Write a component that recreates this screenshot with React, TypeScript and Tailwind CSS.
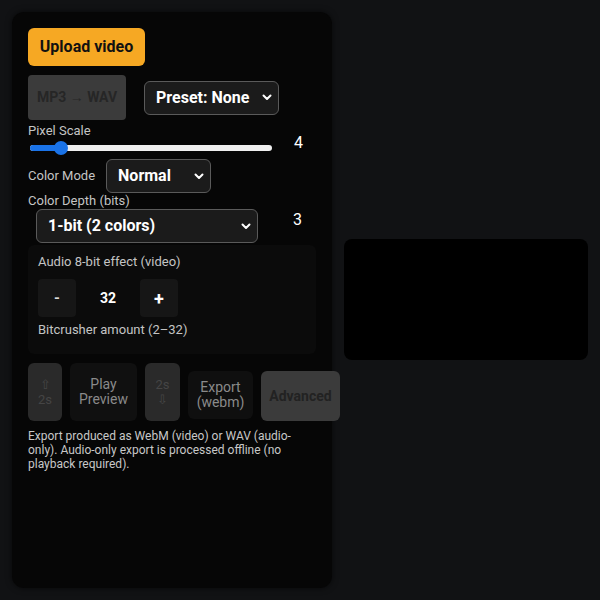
import React from "react";

function Chevron() {
  return (
    <svg width="10" height="7" viewBox="0 0 10 7" className="shrink-0">
      <path d="M1.5 1.5 L5 5 L8.5 1.5" fill="none" stroke="#ffffff" strokeWidth="2" strokeLinecap="round" strokeLinejoin="round" />
    </svg>
  );
}

function Select({ label, className }: { label: string; className: string }) {
  return (
    <div className={"flex items-center justify-between rounded-[6px] border border-[#5a5a5a] bg-[#1b1b1b] pl-[11px] pr-[6px] text-[16px] font-bold text-white " + className}>
      <span>{label}</span>
      <Chevron />
    </div>
  );
}

export default function App() {
  return (
    <div className="min-h-[600px] w-[600px] bg-[#111214] p-[12px] flex gap-[12px] items-start" style={{ fontFamily: "Roboto, 'Liberation Sans', sans-serif" }}>
      <div className="w-[320px] h-[576px] shrink-0 rounded-[12px] bg-[#060606] shadow-[0_0_6px_rgba(0,0,0,0.6)] px-[16px] pt-[16px]">
        <button className="h-[38px] w-[117px] rounded-[6px] bg-[#f6a823] text-[16px] font-bold text-[#111]">Upload video</button>

        <div className="mt-[9px] flex items-center gap-[18px]">
          <div className="flex h-[45px] w-[98px] items-center justify-center rounded-[4px] bg-[#3b3b3b] text-[14px] font-bold text-[#262626]">MP3 → WAV</div>
          <Select label="Preset: None" className="h-[34px] w-[135px]" />
        </div>

        <div className="mt-[3px] text-[13px] leading-[16px] text-[#c4c4c4]">Pixel Scale</div>
        <div className="flex h-[16px] items-start">
          <div className="relative ml-[2px] mt-[2px] h-[14px] w-[242px]">
            <div className="absolute left-0 right-0 top-[4px] h-[6px] rounded-full bg-[#efefef]" />
            <div className="absolute left-0 top-[4px] h-[6px] w-[32px] rounded-full bg-[#1a73e8]" />
            <div className="absolute left-[24px] top-0 h-[14px] w-[14px] rounded-full bg-[#1a73e8]" />
          </div>
          <div className="ml-[22px] -mt-[6px] text-[16px] leading-[20px] text-white">4</div>
        </div>

        <div className="mt-[4px] flex items-center gap-[11px]">
          <span className="text-[13px] text-[#c4c4c4]">Color Mode</span>
          <Select label="Normal" className="h-[34px] w-[105px]" />
        </div>
        <div className="text-[13px] leading-[16px] text-[#c4c4c4]">Color Depth (bits)</div>
        <div className="flex items-start">
          <Select label="1-bit (2 colors)" className="ml-[8px] h-[34px] w-[222px]" />
          <div className="ml-[35px] mt-[1px] text-[16px] leading-[20px] text-white">3</div>
        </div>

        <div className="mt-[2px] h-[109px] rounded-[6px] bg-[#0b0b0b] px-[10px] pt-[9px]">
          <div className="text-[13px] leading-[16px] text-[#c4c4c4]">Audio 8-bit effect (video)</div>
          <div className="mt-[9px] flex items-center">
            <div className="flex h-[38px] w-[38px] items-center justify-center rounded-[4px] bg-[#161616] text-[15px] font-bold text-[#dcdcdc]">-</div>
            <div className="w-[64px] text-center text-[14px] font-bold text-white">32</div>
            <div className="flex h-[38px] w-[38px] items-center justify-center rounded-[4px] bg-[#161616] text-[18px] font-bold text-white">+</div>
          </div>
          <div className="mt-[5px] text-[13px] leading-[16px] text-[#c4c4c4]">Bitcrusher amount (2–32)</div>
        </div>

        <div className="mt-[9px] flex items-end gap-[8px]">
          <div className="flex h-[58px] w-[34px] shrink-0 flex-col items-center justify-center rounded-[6px] bg-[#2a2a2a] text-[13px] leading-[15px] text-[#454545]">
            <span>⇧</span>
            <span>2s</span>
          </div>
          <div className="flex h-[58px] w-[67px] shrink-0 flex-col items-center justify-center rounded-[6px] bg-[#101010] text-[14px] leading-[15px] text-[#8a8a8a]">
            <span>Play</span>
            <span>Preview</span>
          </div>
          <div className="flex h-[58px] w-[35px] shrink-0 flex-col items-center justify-center rounded-[6px] bg-[#2a2a2a] text-[13px] leading-[15px] text-[#454545]">
            <span>2s</span>
            <span>⇩</span>
          </div>
          <div className="mb-[2px] flex h-[48px] w-[65px] shrink-0 flex-col items-center justify-center rounded-[6px] bg-[#0f0f0f] text-[14px] leading-[15px] text-[#8a8a8a]">
            <span>Export</span>
            <span>(webm)</span>
          </div>
          <div className="flex h-[50px] w-[79px] shrink-0 items-center justify-center rounded-[6px] bg-[#3b3b3b] text-[14px] font-bold text-[#222]">Advanced</div>
        </div>

        <p className="mt-[8px] text-[12px] leading-[14px] text-[#c8c8c8]">
          Export produced as WebM (video) or WAV (audio-only). Audio-only export is processed offline (no playback required).
        </p>
      </div>

      <div className="mt-[227px] h-[121px] w-[244px] rounded-[8px] bg-black" />
    </div>
  );
}
